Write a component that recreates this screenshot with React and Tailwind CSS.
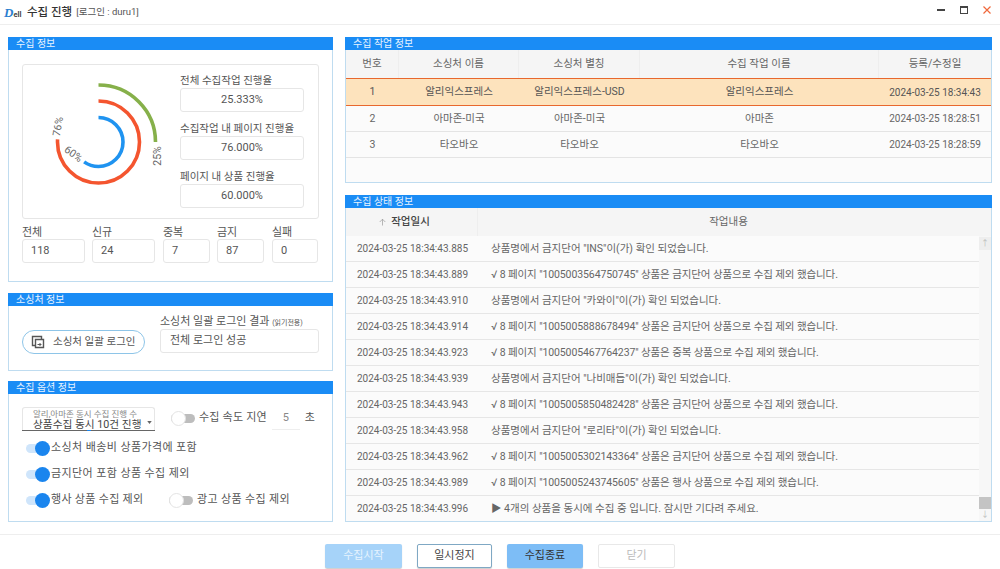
import React from 'react';

const font = "font-[Roboto,'Noto_Sans_CJK_KR',sans-serif]";

const logs = [
  ['2024-03-25 18:34:43.885', '상품명에서 금지단어 "INS"이(가) 확인 되었습니다.'],
  ['2024-03-25 18:34:43.889', '√ 8 페이지 "1005003564750745" 상품은 금지단어 상품으로 수집 제외 했습니다.'],
  ['2024-03-25 18:34:43.910', '상품명에서 금지단어 "카와이"이(가) 확인 되었습니다.'],
  ['2024-03-25 18:34:43.914', '√ 8 페이지 "1005005888678494" 상품은 금지단어 상품으로 수집 제외 했습니다.'],
  ['2024-03-25 18:34:43.923', '√ 8 페이지 "1005005467764237" 상품은 중복 상품으로 수집 제외 했습니다.'],
  ['2024-03-25 18:34:43.939', '상품명에서 금지단어 "나비매듭"이(가) 확인 되었습니다.'],
  ['2024-03-25 18:34:43.943', '√ 8 페이지 "1005005850482428" 상품은 금지단어 상품으로 수집 제외 했습니다.'],
  ['2024-03-25 18:34:43.958', '상품명에서 금지단어 "로리타"이(가) 확인 되었습니다.'],
  ['2024-03-25 18:34:43.962', '√ 8 페이지 "1005005302143364" 상품은 금지단어 상품으로 수집 제외 했습니다.'],
  ['2024-03-25 18:34:43.989', '√ 8 페이지 "1005005243745605" 상품은 행사 상품으로 수집 제외 했습니다.'],
  ['2024-03-25 18:34:43.996', '▶ 4개의 상품을 동시에 수집 중 입니다. 잠시만 기다려 주세요.'],
];

const jobs = [
  ['2', '아마존-미국', '아마존-미국', '아마존', '2024-03-25 18:28:51'],
  ['3', '타오바오', '타오바오', '타오바오', '2024-03-25 18:28:59'],
];

const Panel = ({ title, className, children }) => (
  <section className={`flex flex-col border border-[#bfdcf0] ${className}`}>
    <div className="h-[13px] flex-none bg-[#1a8cf5] -mt-px -mx-px pl-[8px] text-[10px] leading-[13px] text-[#e8f3ff]">{title}</div>
    {children}
  </section>
);

const Box = ({ className = '', children }) => (
  <div className={`flex items-center rounded-[3px] border border-[#e6e6e6] bg-white text-[11px] text-[#555] ${className}`}>{children}</div>
);

const Stat = ({ label, value, w }) => (
  <div className={w}>
    <div className="h-[13px] text-[11px] leading-[13px] text-[#555]">{label}</div>
    <Box className="h-[24px] pl-[8px]">{value}</Box>
  </div>
);

const Rate = ({ label, value }) => (
  <div>
    <div className="h-[14px] text-[10.5px] leading-[14px] text-[#555]">{label}</div>
    <Box className="h-[24px] justify-center">{value}</Box>
  </div>
);

const Toggle = ({ on }) =>
  on ? (
    <div className="relative h-[9px] w-[22px] flex-none rounded-full bg-[#cfe5fb]">
      <div className="absolute -top-[3px] left-[9px] h-[15px] w-[15px] rounded-full bg-[#1a85ee]" />
    </div>
  ) : (
    <div className="relative h-[9px] w-[24px] flex-none rounded-full bg-[#bdbdbd]">
      <div className="absolute -top-[3px] left-0 h-[15px] w-[15px] rounded-full border border-[#e4e4e4] bg-white" />
    </div>
  );

const ProgressChart = () => (
  <svg viewBox="23 65 157 153" className="h-[153px] w-[157px] flex-none">
    <g fill="none" strokeWidth="3.6">
      <circle cx="98.5" cy="142" r="57" stroke="#86b04a" pathLength="100" strokeDasharray="25 75" transform="rotate(-90 98.5 142)" />
      <circle cx="98.5" cy="142" r="41" stroke="#f4552f" pathLength="100" strokeDasharray="76 24" transform="rotate(-90 98.5 142)" />
      <circle cx="98.5" cy="142" r="24.5" stroke="#1f93f0" pathLength="100" strokeDasharray="60 40" transform="rotate(-90 98.5 142)" />
    </g>
    <g fill="#666" fontSize="10.5" textAnchor="middle">
      <text transform="translate(157 156) rotate(-90)" dy="3.5">25%</text>
      <text transform="translate(58 126.5) rotate(-80)" dy="3.5">76%</text>
      <text transform="translate(73.5 154) rotate(36)" dy="3.5">60%</text>
    </g>
  </svg>
);

const LoginIcon = () => (
  <svg viewBox="0 0 14 14" className="h-[14px] w-[14px] flex-none" fill="none" stroke="#555" strokeWidth="1.4">
    <path d="M4 10.5H1.5V1.5H10.5V4" />
    <path d="M4.5 4.5H12.5V12.5H4.5Z" />
    <path d="M6.5 9.5H10M8.5 8L10 9.5L8.5 11" strokeWidth="1" />
  </svg>
);

const Logo = () => (
  <div className="flex w-[23px] flex-none items-end leading-none">
    <span className="font-['Liberation_Serif',serif] text-[13px] font-bold italic text-[#2a7fd0]">D</span>
    <span className="mb-[1px] text-[7.5px] font-bold text-[#444]">ell</span>
  </div>
);

const WindowButtons = () => (
  <div className="flex items-center gap-[15px] pb-[5px] pr-[9px]">
    <div className="h-[2px] w-[8px] bg-[#444]" />
    <div className="h-[8px] w-[8px] border border-t-2 border-[#444]" />
    <svg viewBox="0 0 8 8" className="h-[8px] w-[8px]" stroke="#f0683c" strokeWidth="1.2">
      <path d="M0.5 0.5L7.5 7.5M7.5 0.5L0.5 7.5" />
    </svg>
  </div>
);

const Btn = ({ className, children }) => (
  <button className={`h-[24px] rounded-[2px] text-[11px] ${className}`}>{children}</button>
);

export default function App() {
  return (
    <div className={`flex h-[569px] w-[1000px] flex-col overflow-hidden bg-white ${font}`}>
      {/* title bar */}
      <header className="flex h-[25px] flex-none items-center justify-between border-b border-[#eeeeee]">
        <div className="flex items-center pl-[4px] pt-[1px]">
          <Logo />
          <span className="text-[11.5px] font-medium text-[#333]">수집 진행</span>
          <span className="ml-[4px] text-[9.5px] text-[#555]">[로그인 : duru1]</span>
        </div>
        <WindowButtons />
      </header>

      <main className="flex flex-1 gap-[12px] pb-[12px] pl-[8px] pr-[8px] pt-[12px]">
        {/* left column */}
        <div className="flex w-[325px] flex-none flex-col gap-[11px]">
          <Panel title="수집 정보" className="h-[245px]">
            <div className="px-[13px] pt-[14px]">
              <div className="flex h-[155px] rounded-[3px] border border-[#e6e6e6]">
                <ProgressChart />
                <div className="flex w-[124px] flex-col gap-[10px] pt-[9px]">
                  <Rate label="전체 수집작업 진행율" value="25.333%" />
                  <Rate label="수집작업 내 페이지 진행율" value="76.000%" />
                  <Rate label="페이지 내 상품 진행율" value="60.000%" />
                </div>
              </div>
              <div className="mt-[7px] flex">
                <Stat label="전체" value="118" w="w-[63px]" />
                <Stat label="신규" value="24" w="ml-[7px] w-[63px]" />
                <Stat label="중복" value="7" w="ml-[8px] w-[47px]" />
                <Stat label="금지" value="87" w="ml-[7px] w-[47px]" />
                <Stat label="실패" value="0" w="ml-[8px] w-[46px]" />
              </div>
            </div>
          </Panel>

          <Panel title="소싱처 정보" className="h-[78px]">
            <div className="flex items-end px-[13px] pt-[9px]">
              <button className="mb-[-1px] flex h-[24px] w-[123px] flex-none items-center gap-[8px] rounded-full border border-[#8ec5e8] pl-[8px] text-[10.5px] text-[#555]">
                <LoginIcon />
                소싱처 일괄 로그인
              </button>
              <div className="ml-[15px] flex-1">
                <div className="h-[14px] text-[11px] leading-[14px] text-[#555]">
                  소싱처 일괄 로그인 결과 <span className="text-[7px]">(읽기전용)</span>
                </div>
                <Box className="h-[24px] pl-[9px]">전체 로그인 성공</Box>
              </div>
            </div>
          </Panel>

          <Panel title="수집 옵션 정보" className="h-[141px] mt-[-1px]">
            <div className="flex flex-1 flex-col px-[13px] pt-[12px] text-[11px] text-[#555]">
              <div className="flex items-center">
                <div className="relative h-[23px] w-[133px] flex-none rounded-t-[3px] border border-b-0 border-[#e6e6e6] pl-[10px] pt-[2px] shadow-[0_1px_0_#666]">
                  <div className="text-[8.5px] leading-[9px] text-[#888]">알리,아마존 동시 수집 진행 수</div>
                  <div className="text-[10.7px] leading-[12px] text-[#444]">상품수집 동시 10건 진행</div>
                  <svg viewBox="0 0 6 4" className="absolute right-[2px] top-[13px] h-[3px] w-[5px]" fill="#666">
                    <path d="M0 0H6L3 4Z" />
                  </svg>
                  <div className="absolute bottom-[-1px] left-[64px] h-[1px] w-[4px] bg-[#1a85ee]" />
                </div>
                <div className="ml-[16px] mt-[1px]"><Toggle /></div>
                <span className="ml-[4px] mt-[1px] tracking-[0.2px]">수집 속도 지연</span>
                <div className="ml-[5px] mt-[1px] h-[23px] w-[28px] border-b border-[#eeeeee] pt-[3px] text-center text-[#888]">5</div>
                <span className="ml-[5px] mt-[1px]">초</span>
              </div>
              <div className="mt-[5px] flex h-[26px] items-center pl-[4px]">
                <Toggle on />
                <span className="ml-[3px] tracking-[0.4px]">소싱처 배송비 상품가격에 포함</span>
              </div>
              <div className="flex h-[26px] items-center pl-[4px]">
                <Toggle on />
                <span className="ml-[3px] tracking-[0.4px]">금지단어 포함 상품 수집 제외</span>
              </div>
              <div className="flex h-[26px] items-center pl-[4px]">
                <Toggle on />
                <span className="ml-[3px] w-[118px] tracking-[0.3px]">행사 상품 수집 제외</span>
                <Toggle />
                <span className="ml-[4px] tracking-[0.35px]">광고 상품 수집 제외</span>
              </div>
            </div>
          </Panel>
        </div>

        {/* right column */}
        <div className="flex min-w-0 flex-1 flex-col gap-[12px]">
          <Panel title="수집 작업 정보" className="h-[146px]">
            <div className="grid h-[28px] flex-none grid-cols-[53px_120px_121px_239px_1fr] bg-[#f5f5f5] text-[10.5px] text-[#666]">
              {['번호', '소싱처 이름', '소싱처 별칭', '수집 작업 이름', '등록/수정일'].map((h) => (
                <div key={h} className="flex items-center justify-center border-r border-[#eeeeee] last:border-r-0">{h}</div>
              ))}
            </div>
            <div className="grid h-[28px] flex-none grid-cols-[53px_120px_121px_239px_1fr] items-center border-y border-[#e8682e] bg-[#fde3bd] text-center text-[10.5px] text-[#555]">
              <div>1</div>
              <div>알리익스프레스</div>
              <div>알리익스프레스-USD</div>
              <div>알리익스프레스</div>
              <div className="text-[10px]">2024-03-25 18:34:43</div>
            </div>
            {jobs.map((row) => (
              <div key={row[0]} className="grid h-[26px] flex-none grid-cols-[53px_120px_121px_239px_1fr] items-center border-b border-[#e4e4e4] bg-[#fbfbfb] text-center text-[10.5px] text-[#666]">
                <div>{row[0]}</div>
                <div>{row[1]}</div>
                <div>{row[2]}</div>
                <div>{row[3]}</div>
                <div className="text-[10px]">{row[4]}</div>
              </div>
            ))}
            <div className="flex-1 bg-[#fbfbfb]" />
          </Panel>

          <Panel title="수집 상태 정보" className="flex-1">
            <div className="flex min-h-0 flex-1">
              <div className="flex min-w-0 flex-1 flex-col bg-[#fbfbfb]">
                <div className="grid h-[28px] flex-none grid-cols-[132px_1fr] bg-[#f5f5f5] text-[10.5px] text-[#666]">
                  <div className="flex items-center justify-center gap-[5px] border-r border-[#eeeeee] pr-[14px] font-medium text-[#444]">
                    <svg viewBox="0 0 8 8" className="h-[8px] w-[7px]" fill="none" stroke="#999" strokeWidth="0.8">
                      <path d="M4 8V0.8M0.8 4L4 0.8L7.2 4" />
                    </svg>
                    작업일시
                  </div>
                  <div className="flex items-center justify-center">작업내용</div>
                </div>
                {logs.map(([time, text]) => (
                  <div key={time} className="grid flex-1 grid-cols-[132px_1fr] items-center border-b border-[#e6e6e6] text-[10px] text-[#666] last:border-b-0">
                    <div className="pl-[11px]">{time}</div>
                    <div className={text.startsWith('√') ? 'pl-[13px] text-[10.5px] tracking-[-0.1px]' : 'pl-[13px] text-[10.5px]'}>{text}</div>
                  </div>
                ))}
              </div>
              <div className="flex w-[12px] flex-none flex-col bg-[#f7f7f7]">
                <div className="h-[28px] bg-[#f5f5f5]" />
                <div className="mt-[1px] flex h-[13px] items-center justify-center bg-[#eeeeee] text-[8px] text-[#bbb]">↑</div>
                <div className="flex-1" />
                <div className="h-[12px] bg-[#c4c4c4]" />
                <div className="flex h-[12px] items-center justify-center text-[8px] text-[#bbb]">↓</div>
              </div>
            </div>
          </Panel>
        </div>
      </main>

      {/* footer buttons */}
      <footer className="flex h-[35px] flex-none justify-center gap-[15px] border-t border-[#eeeeee] pt-[9px]">
        <Btn className="w-[77px] bg-[#a6d3f9] text-[#e6f3fe] shadow-[0_1px_1px_#ccc]">수집시작</Btn>
        <Btn className="w-[75px] border border-[#7fa8c4] bg-white text-[#444] shadow-[0_1px_1px_#ccc]">일시정지</Btn>
        <Btn className="w-[76px] bg-[#7dbdf6] text-[#333] shadow-[0_1px_1px_#ccc]">수집종료</Btn>
        <Btn className="w-[77px] border border-[#e8e8e8] bg-white text-[#bbb]">닫기</Btn>
      </footer>
    </div>
  );
}
